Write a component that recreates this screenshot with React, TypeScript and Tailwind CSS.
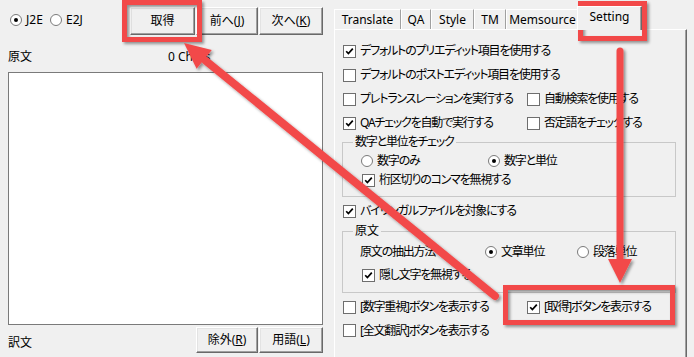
import React from "react";

function Check({ on }: { on?: boolean }) {
  return (
    <span className="w-[13px] h-[13px] shrink-0 bg-white border border-[#6e6e6e] flex items-center justify-center">
      {on && (
        <svg width="9" height="9" viewBox="0 0 9 9">
          <path d="M1.2 4.2 L3.4 6.6 L7.8 1.6" fill="none" stroke="#000" strokeWidth="1.7" />
        </svg>
      )}
    </span>
  );
}

function Radio({ on }: { on?: boolean }) {
  return (
    <span className="w-[12px] h-[12px] shrink-0 rounded-full bg-white border border-[#7a7a7a] flex items-center justify-center">
      {on && <span className="w-[4px] h-[4px] rounded-full bg-black" />}
    </span>
  );
}

// Japanese labels are a bit narrower in the original UI font
function Jp({ children }: { children: React.ReactNode }) {
  return <span className="whitespace-nowrap tracking-[-1.2px]">{children}</span>;
}

function Opt({ on, label, className = "" }: { on?: boolean; label: string; className?: string }) {
  return (
    <div className={"flex items-center gap-[4px] " + className}>
      <Check on={on} />
      <Jp>{label}</Jp>
    </div>
  );
}

function Btn({ children, className = "" }: { children: React.ReactNode; className?: string }) {
  return (
    <div
      className={
        "flex items-center justify-center bg-[#f0f0f0] border border-t-white border-l-white border-r-[#696969] border-b-[#696969] shadow-[inset_-1px_-1px_0_#a0a0a0,inset_1px_1px_0_#e3e3e3] " +
        className
      }
    >
      {children}
    </div>
  );
}

const tabs = [
  { name: "Translate", w: "w-[67px]" },
  { name: "QA", w: "w-[30px]" },
  { name: "Style", w: "w-[43px]" },
  { name: "TM", w: "w-[32px]" },
  { name: "Memsource", w: "w-[73px]" },
];

export default function App() {
  return (
    <div className="relative w-[694px] h-[357px] overflow-hidden bg-[#f0f0f0] text-black text-[12px] leading-[16px] font-['Noto_Sans','Noto_Sans_CJK_JP',sans-serif] [font-feature-settings:'palt'] flex">
      {/* left side */}
      <div className="w-[330px] shrink-0 flex flex-col pl-[8px] pr-[7px]">
        <div className="h-[42px] flex items-start pt-[7px]">
          <div className="h-[26px] flex items-center pl-[2px]">
            <div className="w-[40px] flex items-center gap-[4px]">
              <Radio on />
              <span>J2E</span>
            </div>
            <div className="flex items-center gap-[4px]">
              <Radio />
              <span>E2J</span>
            </div>
          </div>
          <div className="ml-auto flex gap-[1px]">
            <Btn className="w-[65px] h-[28px]">取得</Btn>
            <Btn className="w-[62px] h-[28px]">
              <span>
                前へ(<u>J</u>)
              </span>
            </Btn>
            <Btn className="w-[64px] h-[28px]">
              <span>
                次へ(<u>K</u>)
              </span>
            </Btn>
          </div>
        </div>
        <div className="h-[30px] flex items-center">
          <span className="w-[160px]">原文</span>
          <span>0 Chars</span>
        </div>
        <div className="h-[253px] bg-white border border-[#7a7a7a]" />
        <div className="h-[30px] flex items-center">
          <span className="mt-[6px]">訳文</span>
          <div className="ml-auto flex gap-[1px]">
            <Btn className="w-[62px] h-[26px]">
              <span>
                除外(<u>R</u>)
              </span>
            </Btn>
            <Btn className="w-[64px] h-[26px]">
              <span>
                用語(<u>L</u>)
              </span>
            </Btn>
          </div>
        </div>
      </div>

      {/* right side: tab control */}
      <div className="flex-1 flex flex-col pl-[4px] pr-[7px]">
        <div className="h-[29px] flex items-end shrink-0">
          {tabs.map((t) => (
            <div
              key={t.name}
              className={
                t.w +
                " h-[20px] flex items-center justify-center border-t border-l border-r border-t-white border-l-white border-r-[#a0a0a0] whitespace-nowrap"
              }
            >
              {t.name}
            </div>
          ))}
          <div className="relative z-10 w-[65px] -ml-[2px] h-[24px] -mb-[1px] pb-[3px] flex items-center justify-center bg-[#f0f0f0] border-t border-l border-r border-t-white border-l-white border-r-[#696969] shadow-[inset_-1px_0_0_#a0a0a0]">
            Setting
          </div>
        </div>
        <div className="flex-1 border-t border-l border-r border-t-white border-l-white border-r-[#696969] shadow-[inset_-1px_0_0_#a0a0a0] pt-[9px] pl-[8px]">
          <div className="h-[24px] flex items-center">
            <Opt on label="デフォルトのプリエディット項目を使用する" />
          </div>
          <div className="h-[24px] flex items-center">
            <Opt label="デフォルトのポストエディット項目を使用する" />
          </div>
          <div className="h-[24px] flex items-center">
            <Opt label="プレトランスレーションを実行する" className="w-[184px]" />
            <Opt label="自動検索を使用する" />
          </div>
          <div className="h-[24px] flex items-center">
            <Opt on label="QAチェックを自動で実行する" className="w-[184px]" />
            <Opt label="否定語をチェックする" />
          </div>

          <fieldset className="-mt-[1px] -ml-[1px] w-[334px] border border-[#c8c8c8] pb-[8px]">
            <legend className="ml-[10px] px-[2px] leading-[16px]">
              <Jp>数字と単位をチェック</Jp>
            </legend>
            <div className="h-[22px] flex items-center pl-[18px]">
              <div className="w-[127px] flex items-center gap-[4px]">
                <Radio />
                <Jp>数字のみ</Jp>
              </div>
              <div className="flex items-center gap-[4px]">
                <Radio on />
                <Jp>数字と単位</Jp>
              </div>
            </div>
            <div className="h-[16px] flex items-center pl-[19px]">
              <Opt on label="桁区切りのコンマを無視する" />
            </div>
          </fieldset>

          <div className="mt-[2px] h-[24px] flex items-center">
            <Opt on label="バイリンガルファイルを対象にする" />
          </div>

          <fieldset className="-ml-[1px] w-[334px] border border-[#c8c8c8] pb-[7px]">
            <legend className="ml-[10px] px-[2px] leading-[16px]">原文</legend>
            <div className="h-[26px] flex items-center pl-[17px]">
              <span className="w-[125px]">
                <Jp>原文の抽出方法</Jp>
              </span>
              <div className="w-[92px] flex items-center gap-[4px]">
                <Radio on />
                <Jp>文章単位</Jp>
              </div>
              <div className="flex items-center gap-[4px]">
                <Radio />
                <Jp>段落単位</Jp>
              </div>
            </div>
            <div className="h-[20px] flex items-center pl-[19px]">
              <Opt on label="隠し文字を無視する" />
            </div>
          </fieldset>

          <div className="mt-[2px] h-[24px] flex items-center">
            <Opt label="[数字重視]ボタンを表示する" className="w-[184px]" />
            <Opt on label="[取得]ボタンを表示する" />
          </div>
          <div className="h-[23px] flex items-center">
            <Opt label="[全文翻訳]ボタンを表示する" />
          </div>
        </div>
      </div>

      {/* annotation overlay */}
      <svg className="absolute inset-0 pointer-events-none" width="694" height="357" viewBox="0 0 694 357">
        <defs>
          <filter id="sh" x="-20%" y="-20%" width="140%" height="140%">
            <feDropShadow dx="2" dy="2" stdDeviation="1.5" floodColor="#000" floodOpacity="0.4" />
          </filter>
        </defs>
        <g filter="url(#sh)" fill="none" stroke="#f24a4a" strokeWidth="5">
          <rect x="124.5" y="2.5" width="75" height="37" />
          <rect x="580.5" y="3.5" width="64" height="35" />
          <rect x="505.5" y="287.5" width="167" height="35" />
        </g>
        <g filter="url(#sh)">
          <line x1="495" y1="296" x2="206" y2="61" stroke="#f24a4a" strokeWidth="8" strokeLinecap="round" />
          <polygon points="184,43 211.8,50.1 196.6,68.7" fill="#f24a4a" />
          <line x1="620" y1="51" x2="620" y2="262" stroke="#f24a4a" strokeWidth="7" strokeLinecap="round" />
          <polygon points="608,259 632,259 620,283" fill="#f24a4a" />
        </g>
      </svg>
    </div>
  );
}
